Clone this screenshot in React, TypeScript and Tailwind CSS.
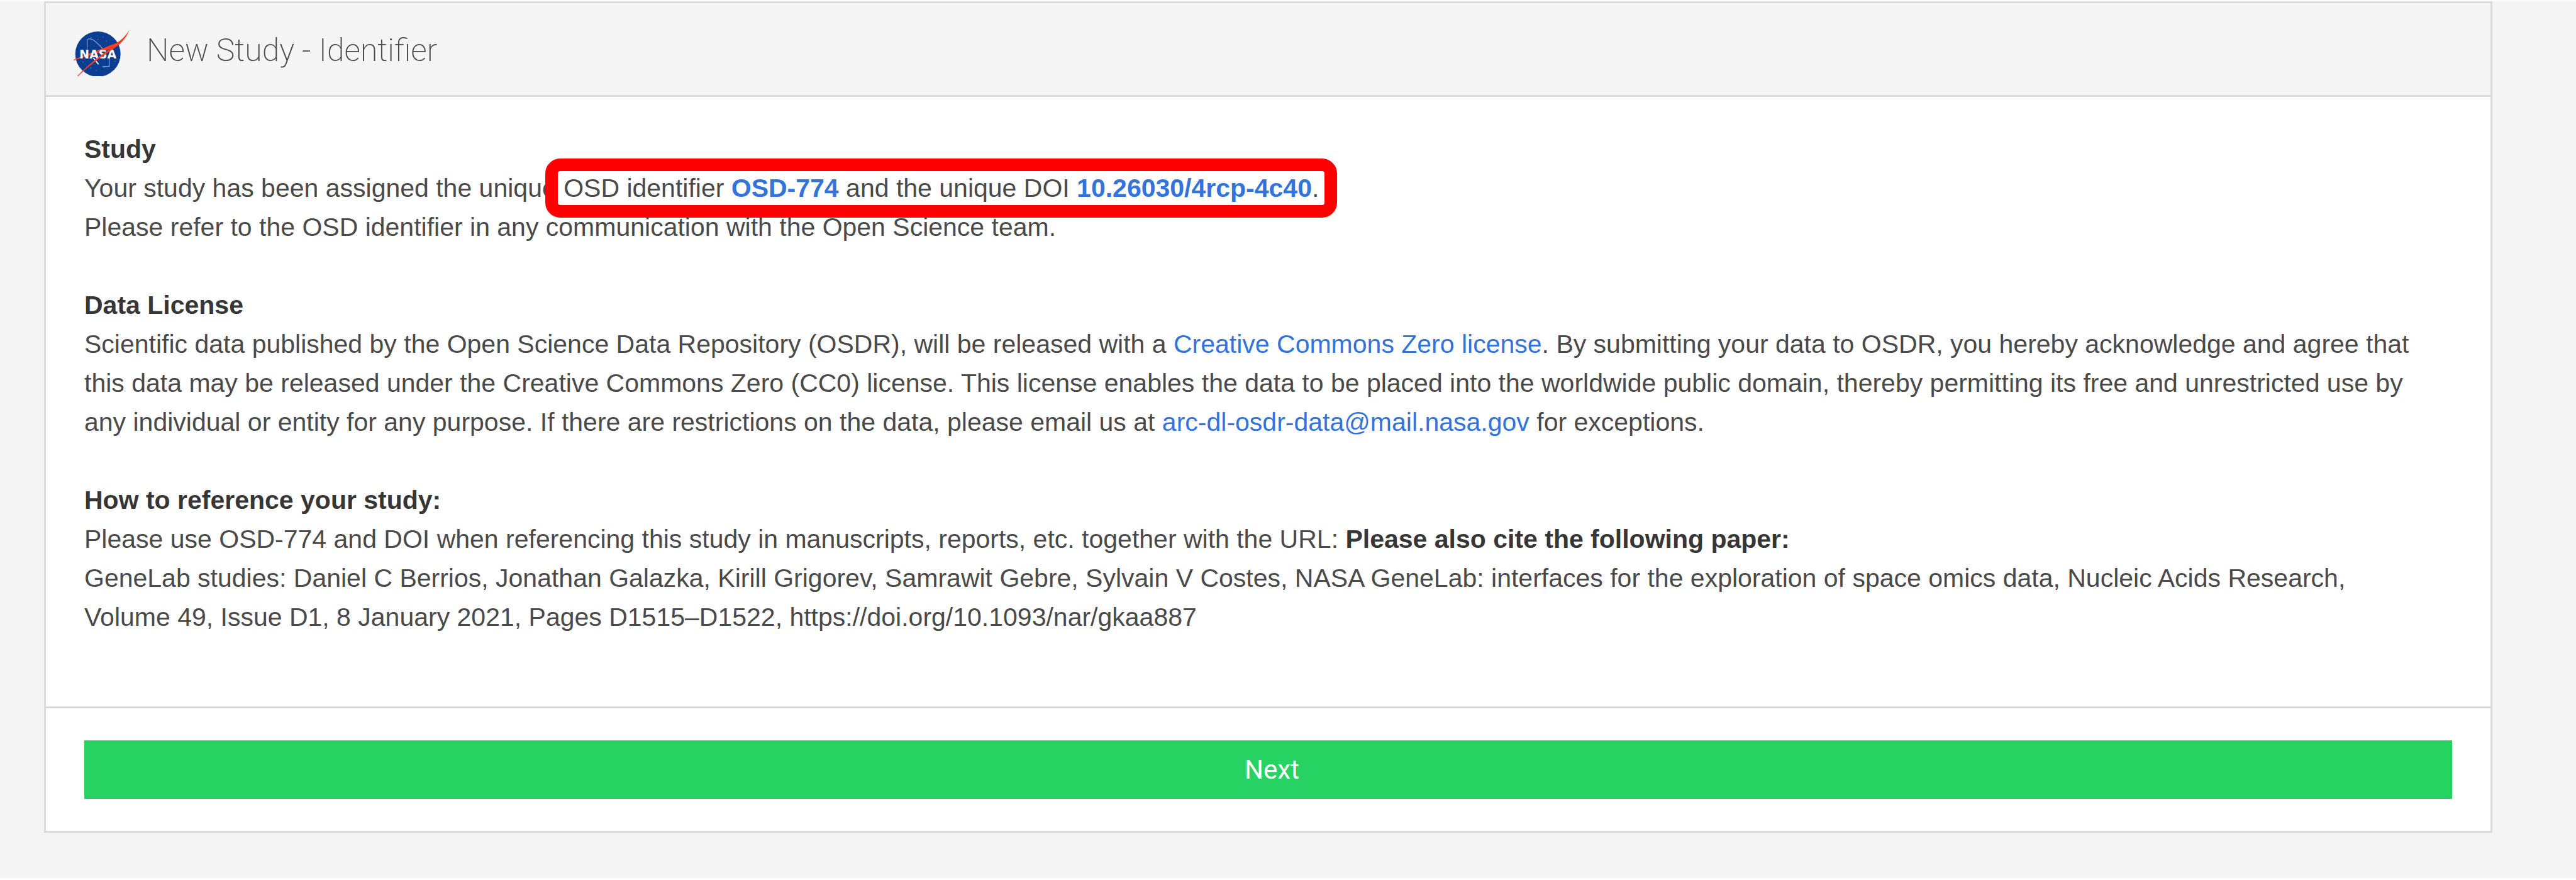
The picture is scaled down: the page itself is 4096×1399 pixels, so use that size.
import type { ReactNode } from "react";

function NasaLogo() {
  return (
    <svg viewBox="0 -8 100 90" className="h-[81px] w-[90px] shrink-0" role="img" aria-label="NASA">
      <circle cx="43" cy="43" r="40" fill="#0b3d91" />
      <g fill="#6f8dc6">
        <circle cx="31" cy="14" r="0.9" />
        <circle cx="42" cy="11" r="0.8" />
        <circle cx="52" cy="13" r="0.8" />
        <circle cx="43" cy="17" r="0.7" />
        <circle cx="58" cy="20" r="0.9" />
        <circle cx="17" cy="57" r="0.8" />
        <circle cx="30" cy="68" r="0.9" />
        <circle cx="40" cy="72" r="0.8" />
        <circle cx="54" cy="67" r="0.8" />
        <circle cx="73" cy="56" r="0.8" />
      </g>
      <path
        d="M24 34V20c0-5 6-5 12-1 9 7 15 14 20 20M51 65h12V46"
        fill="none"
        stroke="#8fa6d6"
        strokeWidth="1.3"
      />
      <path d="M35 50 44 61" fill="none" stroke="#fff" strokeWidth="2" />
      <path
        d="M0 53C18 45 38 39 54 32 65 27 74 25 81 20 88 15 94 8 98.500 0 95 10 90 17 83 24 78 29 64 34 54 38 36 43 18 49 0 54.500Z"
        fill="#fc3d21"
      />
      <text
        x="43"
        y="50.500"
        textAnchor="middle"
        fontSize="21"
        fontWeight="700"
        fontFamily="'DejaVu Sans', sans-serif"
        fill="#fff"
      >
        NASA
      </text>
      <path d="M82 23C62 35 38 50 7 81 8 83 9 82 9 81 36 56 56 44 80 27Z" fill="#fc3d21" />
    </svg>
  );
}

function Section({ title, children }: { title: string; children: ReactNode }) {
  return (
    <section>
      <h2 className="font-bold text-[#363636]">{title}</h2>
      {children}
    </section>
  );
}

const link = "text-[#3273dc]";

export default function App() {
  return (
    <div className="min-h-screen border-t-2 border-b-3 border-white bg-[#f4f4f4] pr-[133px] pb-[70px] pl-[70px] font-['Liberation_Sans',Arial,sans-serif] text-[41px] leading-[62px] text-[#4a4a4a]">
      <main className="border-3 border-[#dbdbdb] bg-white">
        <header className="flex h-[149px] items-center gap-[26px] border-b-3 border-[#dbdbdb] bg-[#f5f5f5] pt-1 pl-[44px]">
          <NasaLogo />
          <h1 className="font-['Roboto','Liberation_Sans',sans-serif] text-[50px] font-extralight text-[#4a4a4a]">
            New Study - Identifier
          </h1>
        </header>

        <div className="flex flex-col gap-[62px] pt-[52px] pr-[101px] pb-[111px] pl-[61px]">
          <Section title="Study">
            <p>
              Your study has been assigned the unique{" "}
              <span className="relative inline-block">
                OSD identifier{" "}
                <a href="#osd-774" className="font-bold text-[#3273dc]">
                  OSD-774
                </a>{" "}
                and the unique DOI{" "}
                <a href="#doi" className="font-bold text-[#3273dc]">
                  10.26030/4rcp-4c40
                </a>
                .
                <span className="pointer-events-none absolute -inset-x-[29px] -inset-y-4 rounded-3xl border-20 border-[#ff0000]" />
              </span>
            </p>
            <p>Please refer to the OSD identifier in any communication with the Open Science team.</p>
          </Section>

          <Section title="Data License">
            <p>
              Scientific data published by the Open Science Data Repository (OSDR), will be released with a{" "}
              <a href="#license" className={link}>
                Creative Commons Zero license
              </a>
              . By submitting your data to OSDR, you hereby acknowledge and agree that this data may be released under
              the Creative Commons Zero (CC0) license. This license enables the data to be placed into the worldwide
              public domain, thereby permitting its free and unrestricted use by any individual or entity for any
              purpose. If there are restrictions on the data, please email us at{" "}
              <a href="mailto:arc-dl-osdr-data@mail.nasa.gov" className={link}>
                arc-dl-osdr-data@mail.nasa.gov
              </a>{" "}
              for exceptions.
            </p>
          </Section>

          <Section title="How to reference your study:">
            <p>
              Please use OSD-774 and DOI when referencing this study in manuscripts, reports, etc. together with the
              URL: <strong className="font-bold text-[#363636]">Please also cite the following paper:</strong>
            </p>
            <p>
              GeneLab studies: Daniel C Berrios, Jonathan Galazka, Kirill Grigorev, Samrawit Gebre, Sylvain V Costes,
              NASA GeneLab: interfaces for the exploration of space omics data, Nucleic Acids Research, Volume 49,
              Issue D1, 8 January 2021, Pages D1515–D1522, https://doi.org/10.1093/nar/gkaa887
            </p>
          </Section>
        </div>

        <footer className="border-t-3 border-[#dbdbdb] px-[61px] py-[51px]">
          <button
            type="button"
            className="block h-[93px] w-full bg-[#26d362] pl-3 font-['Roboto',sans-serif] text-[42px] text-white"
          >
            Next
          </button>
        </footer>
      </main>
    </div>
  );
}
